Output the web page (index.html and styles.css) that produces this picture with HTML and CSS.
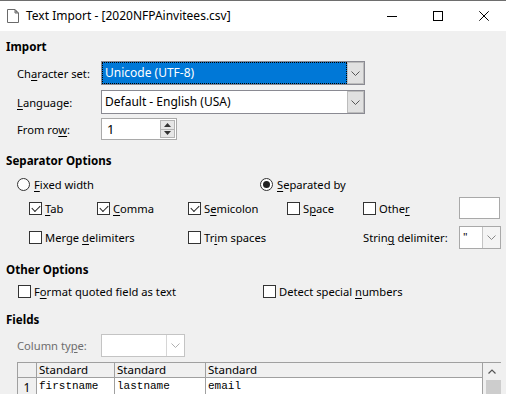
FILE: index.html
```html
<!DOCTYPE html>
<html>
<head>
<meta charset="utf-8">
<link rel="stylesheet" href="styles.css">
</head>
<body>
<div class="win">
  <div class="titlebar">
    <svg class="appicon" width="12" height="14" viewBox="0 0 12 14"><path d="M0.5 0.5 H8 L11.5 4 V13.5 H0.5 Z" fill="#fff" stroke="#6a6a6a"/><path d="M8 0.5 V4 H11.5" fill="none" stroke="#6a6a6a"/><path d="M8.5 0.8 L11.2 3.5 H8.5 Z" fill="#6a6a6a"/></svg>
    <span class="title">Text Import - [2020NFPAinvitees.csv]</span>
    <div class="caption">
      <span class="cbtn"><svg width="10" height="10" viewBox="0 0 10 10"><path d="M0 5.5 H10" stroke="#000" stroke-width="1"/></svg></span>
      <span class="cbtn"><svg width="10" height="10" viewBox="0 0 10 10"><rect x="0.5" y="0.5" width="9" height="9" fill="none" stroke="#000"/></svg></span>
      <span class="cbtn"><svg width="10" height="10" viewBox="0 0 10 10"><path d="M0.3 0.3 L9.7 9.7 M9.7 0.3 L0.3 9.7" stroke="#000" stroke-width="1"/></svg></span>
    </div>
  </div>
  <div class="body">
    <div class="h h-import">Import</div>

    <div class="frow r-charset">
      <span class="lbl">Ch<u>a</u>racter set:</span>
      <div class="combo combo-wide selected">
        <span class="val">Unicode (UTF-8)</span>
        <span class="dd"><svg width="9" height="5" viewBox="0 0 9 5"><path d="M0.5 0.5 L4.5 4.5 L8.5 0.5" fill="none" stroke="#555"/></svg></span>
      </div>
    </div>

    <div class="frow r-lang">
      <span class="lbl"><u>L</u>anguage:</span>
      <div class="combo combo-wide">
        <span class="val">Default - English (USA)</span>
        <span class="dd"><svg width="9" height="5" viewBox="0 0 9 5"><path d="M0.5 0.5 L4.5 4.5 L8.5 0.5" fill="none" stroke="#555"/></svg></span>
      </div>
    </div>

    <div class="frow r-from">
      <span class="lbl">From ro<u>w</u>:</span>
      <div class="spin">
        <span class="val">1</span>
        <span class="spinbtns">
          <span class="sb"><svg width="7" height="4" viewBox="0 0 7 4"><path d="M0 4 L3.5 0 L7 4 Z" fill="#333"/></svg></span>
          <span class="sb"><svg width="7" height="4" viewBox="0 0 7 4"><path d="M0 0 L3.5 4 L7 0 Z" fill="#333"/></svg></span>
        </span>
      </div>
    </div>

    <div class="h h-sep">Separator Options</div>

    <div class="radiorow">
      <label class="opt o-fixed"><span class="radio"></span><span><u>F</u>ixed width</span></label>
      <label class="opt"><span class="radio on"></span><span><u>S</u>eparated by</span></label>
    </div>

    <div class="checkrow c1">
      <label class="opt w-tab"><span class="cb on"></span><span><u>T</u>ab</span></label>
      <label class="opt w-comma"><span class="cb on"></span><span><u>C</u>omma</span></label>
      <label class="opt w-semi"><span class="cb on"></span><span>S<u>e</u>micolon</span></label>
      <label class="opt w-space"><span class="cb"></span><span>S<u>p</u>ace</span></label>
      <label class="opt w-other"><span class="cb"></span><span>Othe<u>r</u></span></label>
      <span class="textbox"></span>
    </div>

    <div class="checkrow c2">
      <label class="opt w-merge"><span class="cb"></span><span>Merge <u>d</u>elimiters</span></label>
      <label class="opt w-trim"><span class="cb"></span><span>Tr<u>i</u>m spaces</span></label>
      <span class="plain w-strdel">Strin<u>g</u> delimiter:</span>
      <div class="smallcombo">
        <span class="val">"</span>
        <span class="dd2"><svg width="9" height="5" viewBox="0 0 9 5"><path d="M0.5 0.5 L4.5 4.5 L8.5 0.5" fill="none" stroke="#888"/></svg></span>
      </div>
    </div>

    <div class="h h-other">Other Options</div>

    <div class="otherrow">
      <label class="opt w-format"><span class="cb"></span><span>F<u>o</u>rmat quoted field as text</span></label>
      <label class="opt"><span class="cb"></span><span>Detect special <u>n</u>umbers</span></label>
    </div>

    <div class="h h-fields">Fields</div>

    <div class="frow r-coltype">
      <span class="lbl disabled">Column ty<u>p</u>e:</span>
      <div class="combo combo-dis">
        <span class="val"></span>
        <span class="dd dd-dis"><svg width="9" height="5" viewBox="0 0 9 5"><path d="M0.5 0.5 L4.5 4.5 L8.5 0.5" fill="none" stroke="#b0b0b0"/></svg></span>
      </div>
    </div>

    <div class="grid">
      <div class="gridmain">
        <div class="ghead">
          <span class="gc gnum"></span>
          <span class="gc g1">Standard</span>
          <span class="gc g2">Standard</span>
          <span class="gc g3">Standard</span>
        </div>
        <div class="grow">
          <span class="gc gnum">1</span>
          <span class="gc g1 mono">firstname</span>
          <span class="gc g2 mono">lastname</span>
          <span class="gc g3 mono">email</span>
        </div>
      </div>
      <div class="vscroll">
        <span class="sarrow"><svg width="8" height="5" viewBox="0 0 8 5"><path d="M0.5 4.5 L4 1 L7.5 4.5" fill="none" stroke="#555" stroke-width="1.2"/></svg></span>
        <span class="sthumb"></span>
      </div>
    </div>
  </div>
</div>
</body>
</html>
```

FILE: styles.css
```css
* { box-sizing: border-box; }
html, body { margin: 0; padding: 0; }
body {
  font-family: "Noto Sans", "Open Sans", sans-serif;
  font-size: 11.2px;
  color: #000;
  background: #f0f0f0;
}
u { text-decoration: underline; text-underline-offset: 2px; }

.win { width: 506px; height: 394px; overflow: hidden; background: #f0f0f0; }

.titlebar {
  height: 31px;
  background: #fff;
  border-top: 1px solid #6e6e6e;
  display: flex;
  align-items: center;
}
.appicon { margin-left: 7px; margin-top: -1px; }
.title { margin-left: 7px; font-size: 12px; line-height: 16px; }
.caption { margin-left: auto; display: flex; }
.cbtn {
  width: 46px; height: 30px;
  display: flex; align-items: center; justify-content: center;
}
.caption .cbtn:last-child { width: 45px; }

.body { display: flex; flex-direction: column; }

.h { font-weight: bold; height: 16px; line-height: 16px; margin-left: 6px; font-size: 11.6px; }
.h-import { margin-top: 8px; }
.h-sep { margin-top: 13px; }
.h-other { margin-top: 13px; }
.h-fields { margin-top: 13px; }

.frow { display: flex; align-items: center; padding-left: 17px; }
.lbl { width: 84px; }
.disabled { color: #6d6d6d; }
.r-charset { margin-top: 6px; height: 24px; }
.r-lang { margin-top: 5px; height: 24px; }
.r-from { margin-top: 4px; height: 22px; }
.r-coltype { margin-top: 6px; height: 23px; }

.combo {
  height: 100%;
  border: 1px solid #8a8a92;
  background: #fff;
  display: flex;
  align-items: stretch;
}
.combo-wide { width: 264px; }
.combo .val { flex: 1; padding-left: 3px; line-height: 21px; white-space: nowrap; font-size: 12px; }
.combo.selected .val {
  background: #0078d7;
  color: #fff;
  outline: 1px dotted #000;
  outline-offset: -1px;
  border: 1px dotted #fff;
  line-height: 20px;
  padding-left: 2px;
}
.dd {
  width: 17px;
  background: #e1e1e1;
  border: 1px solid #bcbcbc;
  display: flex; align-items: center; justify-content: center;
}
.combo-dis { width: 84px; border-color: #c4c4c4; }
.dd-dis { background: #fff; border: none; border-left: 1px solid #d6d6d6; width: 18px; }

.spin {
  width: 76px; height: 22px;
  border: 1px solid #a9a9a9;
  background: #fff;
  display: flex;
}
.spin .val { flex: 1; padding-left: 5px; line-height: 20px; font-size: 13px; }
.spinbtns { width: 16px; display: flex; flex-direction: column; padding: 1px 1px 1px 0; }
.sb {
  flex: 1;
  background: #e6e6e6;
  border: 1px solid #b4b4b4;
  display: flex; align-items: center; justify-content: center;
}
.sb + .sb { border-top: none; }

.opt { display: flex; align-items: center; white-space: nowrap; }
.cb {
  width: 13px; height: 13px;
  border: 1px solid #333;
  background: #fff;
  margin-right: 3px;
  flex: none;
  position: relative;
}
.cb.on::after {
  content: "";
  position: absolute;
  left: 2px; top: 0px;
  width: 7px; height: 4px;
  border-left: 1px solid #222;
  border-bottom: 1px solid #222;
  transform: translate(0px, 2px) rotate(-45deg);
  transform-origin: center;
}
.radio {
  width: 13px; height: 13px;
  border: 1px solid #333;
  border-radius: 50%;
  background: #fff;
  margin-right: 4px;
  flex: none;
  display: flex; align-items: center; justify-content: center;
}
.radio.on::after {
  content: "";
  width: 7px; height: 7px;
  border-radius: 50%;
  background: #222;
}

.radiorow { display: flex; height: 16px; margin-top: 7px; padding-left: 17px; }
.o-fixed { width: 243px; }

.checkrow { display: flex; align-items: center; padding-left: 29px; }
.c1 { margin-top: 5px; height: 22px; }
.c2 { margin-top: 7px; height: 23px; }
.w-tab { width: 68px; }
.w-comma { width: 91px; }
.w-semi { width: 99px; }
.w-space { width: 76px; }
.w-other { width: 96px; }
.w-merge { width: 159px; }
.w-trim { width: 175px; }
.w-strdel { width: 96px; white-space: nowrap; }
.textbox {
  width: 41px; height: 22px;
  border: 1px solid #a9a9a9;
  background: #fff;
}
.smallcombo {
  width: 42px; height: 23px;
  border: 1px solid #a9a9a9;
  background: #fff;
  display: flex;
}
.smallcombo .val { flex: 1; padding-left: 3px; line-height: 19px; }
.dd2 {
  width: 18px;
  border-left: 1px solid #c4c4c4;
  background: #f4f4f4;
  display: flex; align-items: center; justify-content: center;
}

.otherrow { display: flex; height: 16px; margin-top: 5px; padding-left: 18px; }
.w-format { width: 245px; }

.grid {
  margin-top: 5px;
  margin-left: 17px;
  width: 484px;
  height: 40px;
  display: flex;
  border-top: 1px solid #a0a0a0;
  border-left: 1px solid #a0a0a0;
}
.gridmain { width: 465px; display: flex; flex-direction: column; border-right: 1px solid #a0a0a0; }
.ghead { display: flex; height: 15px; flex: none; background: #f0f0f0; border-bottom: 1px solid #a0a0a0; }
.grow { display: flex; height: 24px; background: #fff; }
.gc { line-height: 14px; padding-left: 2px; white-space: nowrap; }
.ghead .gc { font-size: 11.5px; line-height: 14px; }
.gnum { width: 18px; flex: none; }
.ghead .gc + .gc, .grow .gc + .gc { border-left: 1px solid #a0a0a0; }
.g1 { width: 78px; flex: none; }
.g2 { width: 91px; flex: none; }
.g3 { flex: 1; }
.grow .gnum { background: #f0f0f0; text-align: center; padding: 3px 0 0 0; line-height: 14px; font-size: 12px; }
.mono { font-family: "Liberation Mono", "DejaVu Sans Mono", monospace; font-size: 11px; line-height: 13px; padding-top: 2px; }
.vscroll { width: 18px; display: flex; flex-direction: column; align-items: center; }
.sarrow { height: 17px; display: flex; align-items: center; justify-content: center; }
.sthumb { width: 15px; flex: 1; background: #cdcdcd; margin-left: 2px; }
```
